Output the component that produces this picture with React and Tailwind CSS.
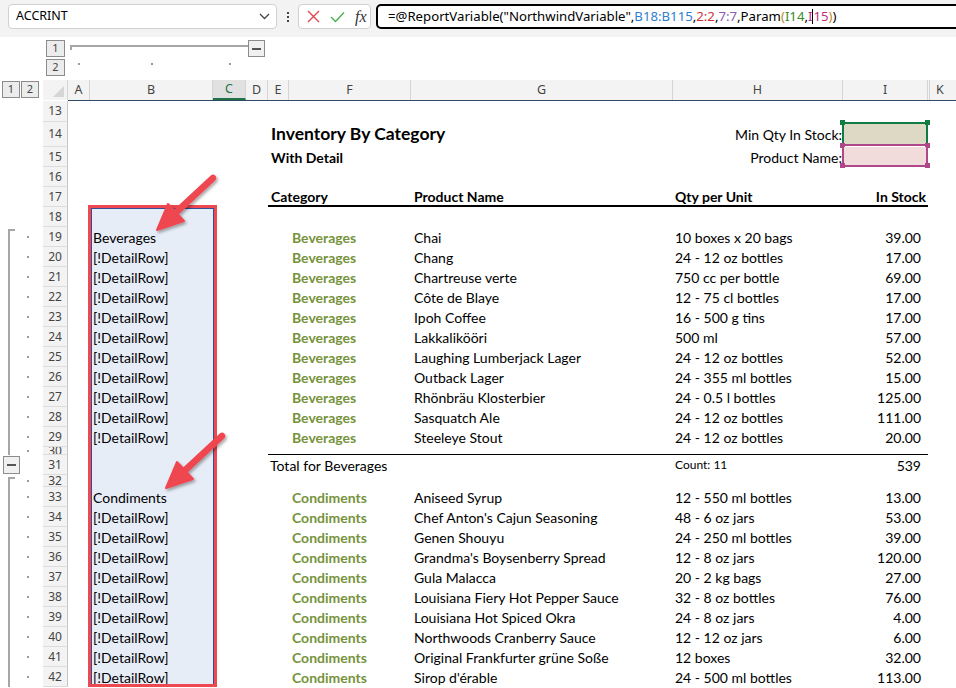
import React from 'react';

const CELL = "font-['Lato','Liberation_Sans',sans-serif] text-[14px] text-black";
const UI = "font-['Noto_Sans','Open_Sans',sans-serif]";

const beverages = [
  ['Chai', '10 boxes x 20 bags', '39.00'],
  ['Chang', '24 - 12 oz bottles', '17.00'],
  ['Chartreuse verte', '750 cc per bottle', '69.00'],
  ['Côte de Blaye', '12 - 75 cl bottles', '17.00'],
  ['Ipoh Coffee', '16 - 500 g tins', '17.00'],
  ['Lakkalikööri', '500 ml', '57.00'],
  ['Laughing Lumberjack Lager', '24 - 12 oz bottles', '52.00'],
  ['Outback Lager', '24 - 355 ml bottles', '15.00'],
  ['Rhönbräu Klosterbier', '24 - 0.5 l bottles', '125.00'],
  ['Sasquatch Ale', '24 - 12 oz bottles', '111.00'],
  ['Steeleye Stout', '24 - 12 oz bottles', '20.00'],
];

const condiments = [
  ['Aniseed Syrup', '12 - 550 ml bottles', '13.00'],
  ["Chef Anton's Cajun Seasoning", '48 - 6 oz jars', '53.00'],
  ['Genen Shouyu', '24 - 250 ml bottles', '39.00'],
  ["Grandma's Boysenberry Spread", '12 - 8 oz jars', '120.00'],
  ['Gula Malacca', '20 - 2 kg bags', '27.00'],
  ['Louisiana Fiery Hot Pepper Sauce', '32 - 8 oz bottles', '76.00'],
  ['Louisiana Hot Spiced Okra', '24 - 8 oz jars', '4.00'],
  ['Northwoods Cranberry Sauce', '12 - 12 oz jars', '6.00'],
  ['Original Frankfurter grüne Soße', '12 boxes', '32.00'],
  ["Sirop d'érable", '24 - 500 ml bottles', '113.00'],
];

function Gutter({ kind, dot }) {
  if (kind === 'minus') {
    return (
      <div className="w-[43px] shrink-0 flex items-center pl-[3px]">
        <div className="w-[17px] h-[18px] border border-[#8c8c8c] bg-[#f0f0f0] flex items-center justify-center">
          <div className="w-[9px] h-[2px] bg-[#555]" />
        </div>
      </div>
    );
  }
  return (
    <div className="w-[43px] shrink-0 flex">
      <div className="w-[8px]" />
      <div
        className={
          kind === 'start'
            ? 'w-[7px] mt-[2px] border-l-2 border-t-2 border-[#a6a6a6]'
            : kind === 'line'
            ? 'w-[7px] border-l-2 border-[#a6a6a6]'
            : 'w-[7px]'
        }
      />
      <div className="flex-1 flex items-center pl-[12px]">
        {dot && <div className="w-[2px] h-[2px] bg-[#9a9a9a]" />}
      </div>
    </div>
  );
}

// one sheet row: gutter, row number, then cells A..K
function Row({ n, h, gutter = 'none', dot = false, sel = false, b, e, f, g, hh, i, span = '' }) {
  return (
    <div className={`flex shrink-0 ${h}`}>
      <Gutter kind={gutter} dot={dot} />
      <div className={`w-[25px] shrink-0 bg-[#f3f3f3] border-r border-r-[#c6c6c6] border-b border-b-[#dcdcdc] flex items-center justify-center overflow-hidden text-[12px] text-[#444] ${UI}`}>
        {n}
      </div>
      <div className="w-[22px] shrink-0" />
      <div className={`w-[123px] shrink-0 flex items-center pl-[3px] whitespace-nowrap ${sel ? 'bg-[#e7edf7]' : ''} ${CELL}`}>{b}</div>
      <div className="w-[33px] shrink-0" />
      <div className="w-[22px] shrink-0" />
      <div className={`w-[660px] shrink-0 flex ${span} ${CELL}`}>
        <div className="w-[21px] shrink-0 flex items-center whitespace-nowrap">{e}</div>
        <div className="w-[122px] shrink-0 flex items-center whitespace-nowrap">{f}</div>
        <div className="w-[262px] shrink-0 flex items-center whitespace-nowrap">{g}</div>
        <div className="w-[170px] shrink-0 flex items-center whitespace-nowrap">{hh}</div>
        <div className="w-[85px] shrink-0 flex items-center justify-end whitespace-nowrap relative">{i}</div>
      </div>
      <div className="flex-1" />
    </div>
  );
}

function DataRow({ n, cat, item, label = '[!DetailRow]', gutter = 'line' }) {
  return (
    <Row
      n={n}
      h="h-[20px]"
      gutter={gutter}
      dot
      sel
      b={label}
      f={<span className="pl-[3px] font-bold text-[#76923c]">{cat}</span>}
      g={<span className="pl-[3px]">{item[0]}</span>}
      hh={<span className="pl-[2px]">{item[1]}</span>}
      i={<span className="pr-[7px]">{item[2]}</span>}
    />
  );
}

function Handle({ pos, color }) {
  return <div className={`absolute w-[5px] h-[5px] ${pos} ${color}`} />;
}

function Arrow({ dx, dy }) {
  const t = (x, y) => `${x + dx},${y + dy}`;
  return (
    <g>
      <line x1={213 + dx} y1={178 + dy} x2={172 + dx} y2={216 + dy} stroke="#ee4650" strokeWidth="6.5" strokeLinecap="round" />
      <polygon points={`${t(157, 230)} ${t(184, 221)} ${t(168, 204)}`} fill="#ee4650" stroke="#ee4650" strokeWidth="2" strokeLinejoin="round" />
    </g>
  );
}

export default function App() {
  const cols = [
    ['A', 'w-[22px]'],
    ['B', 'w-[123px]'],
    ['C', 'w-[33px]'],
    ['D', 'w-[22px]'],
    ['E', 'w-[21px]'],
    ['F', 'w-[122px]'],
    ['G', 'w-[262px]'],
    ['H', 'w-[170px]'],
    ['I', 'w-[85px]'],
  ];

  return (
    <div className="w-[956px] h-[688px] overflow-hidden relative bg-white flex flex-col">
      {/* formula bar */}
      <div className="h-[37px] shrink-0 bg-[#f3f3f3] flex items-start pt-[4px] pl-[8px]">
        <div className={`w-[269px] h-[25px] shrink-0 bg-white border border-[#d1d1d1] rounded-[4px] flex items-center justify-between pl-[7px] pr-[6px] text-[12.5px] text-black ${UI}`}>
          <span>ACCRINT</span>
          <svg width="11" height="7" viewBox="0 0 11 7"><path d="M1 1l4.5 4.5L10 1" fill="none" stroke="#444" strokeWidth="1.3" /></svg>
        </div>
        <div className="w-[21px] h-[25px] shrink-0 flex flex-col items-center justify-center gap-[2px]">
          <div className="w-[2px] h-[2px] bg-[#444]" />
          <div className="w-[2px] h-[2px] bg-[#444]" />
          <div className="w-[2px] h-[2px] bg-[#444]" />
        </div>
        <div className="w-[73px] h-[25px] shrink-0 bg-white border border-[#d1d1d1] rounded-[4px] flex items-center pl-[8px] gap-[10px]">
          <svg width="13" height="13" viewBox="0 0 13 13"><path d="M1 1l11 11M12 1L1 12" stroke="#e0464b" strokeWidth="1.4" /></svg>
          <svg width="15" height="12" viewBox="0 0 15 12"><path d="M1 6l4.5 4.5L14 1.5" fill="none" stroke="#4caf50" strokeWidth="1.4" /></svg>
          <span className="font-['Liberation_Serif',serif] italic text-[16px] text-[#333] leading-none">fx</span>
        </div>
        <div className={`ml-[5px] w-[600px] h-[25px] shrink-0 bg-white border-2 border-black rounded-l-[5px] flex items-center pl-[10px] text-[13.2px] text-black whitespace-nowrap ${UI}`}>
          <span>=@ReportVariable("NorthwindVariable",</span>
          <span className="text-[#2f7fd0]">B18:B115</span>
          <span>,</span>
          <span className="text-[#d13438]">2:2</span>
          <span>,</span>
          <span className="text-[#8a5fb0]">7:7</span>
          <span>,Param</span>
          <span className="text-[#c08a2a]">(</span>
          <span className="text-[#3c8a2e]">I14</span>
          <span>,</span>
          <span className="text-[#c2307a]">I</span>
          <span className="w-[1px] h-[15px] bg-black" />
          <span className="text-[#c2307a]">15</span>
          <span className="text-[#c08a2a]">)</span>
          <span>)</span>
        </div>
      </div>

      {/* column outline area */}
      <div className={`h-[43px] shrink-0 flex ${UI}`}>
        <div className="w-[46px] shrink-0" />
        <div className="w-[19px] shrink-0 flex flex-col gap-[2px] pt-[3px]">
          <div className="h-[17px] border border-[#8c8c8c] bg-[#ececec] flex items-center justify-center text-[11px] text-[#444]">1</div>
          <div className="h-[17px] border border-[#8c8c8c] bg-[#ececec] flex items-center justify-center text-[11px] text-[#444]">2</div>
        </div>
        <div className="w-[3px] shrink-0" />
        <div className="flex flex-col pt-[3px]">
          <div className="h-[17px] flex">
            <div className="w-[2px]" />
            <div className="w-[178px] mt-[5px] h-[5px] border-t-2 border-l-2 border-[#a6a6a6]" />
            <div className="w-[17px] h-[17px] border border-[#8c8c8c] bg-[#f0f0f0] flex items-center justify-center">
              <div className="w-[9px] h-[2px] bg-[#555]" />
            </div>
          </div>
          <div className="h-[17px] mt-[2px] flex pt-[4px]">
            <div className="w-[22px] flex justify-center"><div className="w-[2px] h-[2px] bg-[#9a9a9a]" /></div>
            <div className="w-[123px] flex justify-center"><div className="w-[2px] h-[2px] bg-[#9a9a9a]" /></div>
            <div className="w-[33px] flex justify-center"><div className="w-[2px] h-[2px] bg-[#9a9a9a]" /></div>
          </div>
        </div>
      </div>

      {/* column headers */}
      <div className={`h-[20px] shrink-0 flex ${UI}`}>
        <div className="w-[43px] shrink-0 flex items-start pt-[1px] pl-[2px]">
          <div className="w-[18px] h-[17px] border border-[#8c8c8c] bg-[#ececec] flex items-center justify-center text-[11px] text-[#444]">1</div>
          <div className="w-[18px] h-[17px] ml-[1px] border border-[#8c8c8c] bg-[#ececec] flex items-center justify-center text-[11px] text-[#444]">2</div>
        </div>
        <div className="w-[25px] shrink-0 bg-[#f3f3f3] border-r border-[#d4d4d4] flex items-end justify-end p-[3px]">
          <svg width="11" height="11" viewBox="0 0 11 11"><path d="M11 0V11H0Z" fill="#d6d6d6" /></svg>
        </div>
        {cols.map(([l, w]) => (
          <div
            key={l}
            className={
              l === 'C'
                ? `${w} shrink-0 bg-[#e1e1e1] border-r border-[#d4d4d4] border-b-2 border-b-[#217346] flex items-center justify-center text-[12.5px] text-[#217346]`
                : `${w} shrink-0 bg-[#f3f3f3] border-r border-[#d4d4d4] flex items-center justify-center text-[12.5px] text-[#444]`
            }
          >
            {l}
          </div>
        ))}
        <div className="w-[2px] shrink-0 bg-[#f3f3f3] border-r border-[#d4d4d4]" />
        <div className="flex-1 bg-[#f3f3f3] flex items-center pl-[6px] text-[12.5px] text-[#444]">K</div>
      </div>
      <div className="h-[1px] shrink-0 bg-[#2e4a67] ml-[68px]" />

      {/* sheet rows */}
      <Row n={13} h="h-[21px]" />
      <Row
        n={14}
        h="h-[25px]"
        e={<span className="pl-[3px] font-bold text-[17.5px]">Inventory By Category</span>}
        hh={<span className="w-full text-right pr-[1px]">Min Qty In Stock:</span>}
        i={
          <div className="w-[86px] h-[24px] -ml-[1px] mt-[-2px] bg-[#ddd9c4] border-2 border-[#107c41] border-b-[#b0478a] relative">
            <Handle pos="-left-[4px] -top-[4px]" color="bg-[#107c41]" />
            <Handle pos="-right-[4px] -top-[4px]" color="bg-[#107c41]" />
            <Handle pos="-left-[4px] -bottom-[4px]" color="bg-[#b0478a]" />
            <Handle pos="-right-[4px] -bottom-[4px]" color="bg-[#b0478a]" />
          </div>
        }
      />
      <Row
        n={15}
        h="h-[20px]"
        e={<span className="pl-[3px] font-bold">With Detail</span>}
        hh={<span className="w-full text-right pr-[1px]">Product Name:</span>}
        i={
          <div className="w-[86px] h-[20px] -ml-[1px] bg-[#f2dcdb] border-2 border-t-0 border-[#b0478a] relative">
            <Handle pos="-left-[4px] -bottom-[3px]" color="bg-[#b0478a]" />
            <Handle pos="-right-[4px] -bottom-[3px]" color="bg-[#b0478a]" />
          </div>
        }
      />
      <Row n={16} h="h-[20px]" />
      <Row
        n={17}
        h="h-[20px]"
        span="border-b-2 border-black"
        e={<span className="pl-[3px] font-bold">Category</span>}
        g={<span className="pl-[3px] font-bold">Product Name</span>}
        hh={<span className="pl-[2px] font-bold">Qty per Unit</span>}
        i={<span className="pr-[2px] font-bold">In Stock</span>}
      />
      <Row n={18} h="h-[20px]" sel />
      {beverages.map((it, k) => (
        <DataRow
          key={it[0]}
          n={19 + k}
          cat="Beverages"
          item={it}
          label={k === 0 ? 'Beverages' : '[!DetailRow]'}
          gutter={k === 0 ? 'start' : 'line'}
        />
      ))}
      <Row n={30} h="h-[8px]" gutter="line" dot sel span="border-b border-black" />
      <Row
        n={31}
        h="h-[20px]"
        gutter="minus"
        sel
        e={<span className="pl-[2px]">Total for Beverages</span>}
        hh={<span className="pl-[2px] text-[12px]">Count: 11</span>}
        i={<span className="pr-[7px]">539</span>}
      />
      <Row n={32} h="h-[12px]" gutter="start" dot sel />
      {condiments.map((it, k) => (
        <DataRow
          key={it[0]}
          n={33 + k}
          cat="Condiments"
          item={it}
          label={k === 0 ? 'Condiments' : '[!DetailRow]'}
        />
      ))}

      {/* annotation: red box round the B column selection */}
      <div className="absolute left-[88px] top-[205px] w-[129px] h-[482px] border-[3px] border-[#ee4850] pointer-events-none">
        <div className="w-full h-full border-x border-t border-[#2f4f9a]" />
      </div>

      {/* annotation arrows */}
      <svg className="absolute left-0 top-0 pointer-events-none" width="956" height="688" viewBox="0 0 956 688">
        <defs>
          <filter id="sh" x="-30%" y="-30%" width="160%" height="160%">
            <feDropShadow dx="1.5" dy="2" stdDeviation="1.5" floodColor="#000" floodOpacity="0.35" />
          </filter>
        </defs>
        <g filter="url(#sh)">
          <Arrow dx={0} dy={0} />
          <Arrow dx={9} dy={258} />
        </g>
      </svg>
    </div>
  );
}
